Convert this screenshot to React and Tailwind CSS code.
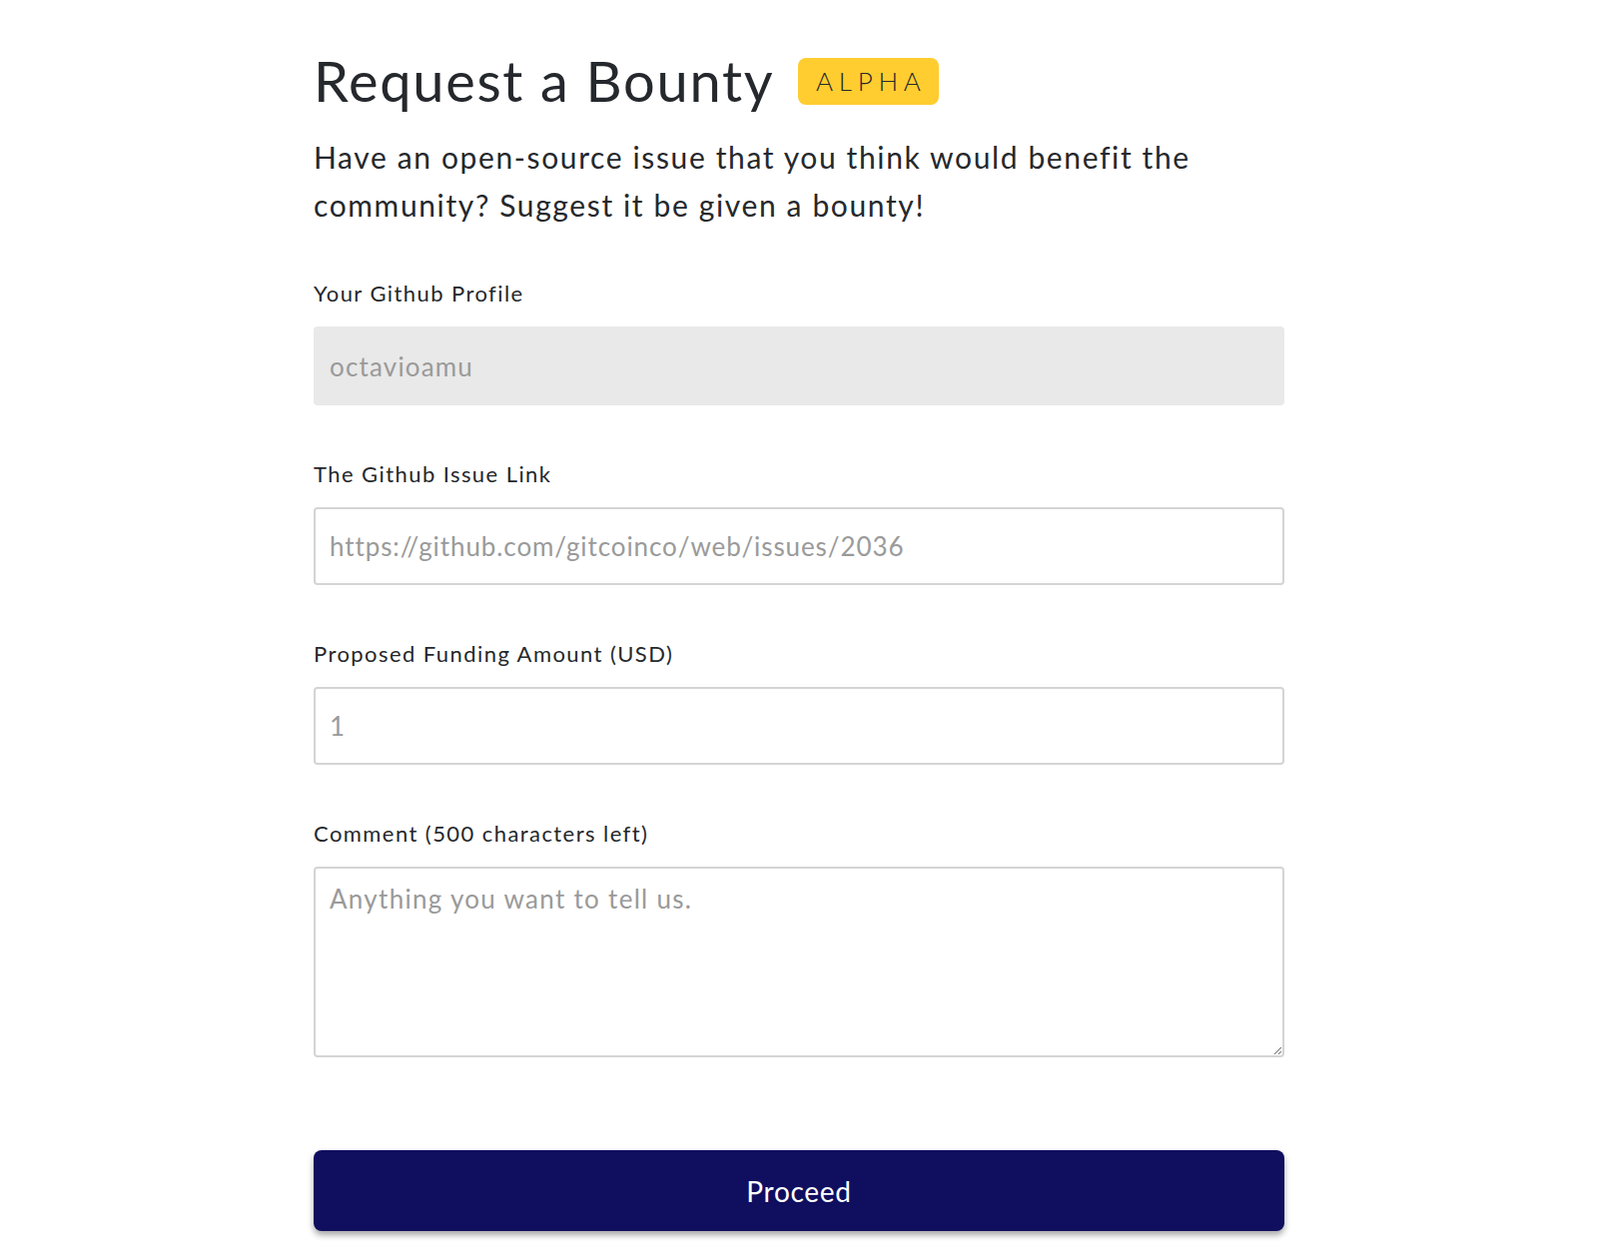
import React from 'react';

const font = "font-['Lato','Open_Sans',sans-serif]";

function Field({ label, children }) {
  return (
    <div className="mb-[52px]">
      <label className="block text-[22px] leading-[33px] tracking-[0.065em] text-[#25282c] mb-[17px]">{label}</label>
      {children}
    </div>
  );
}

export default function App() {
  return (
    <div className={`min-h-screen bg-white flex justify-center pr-[2px] ${font}`}>
      <div className="w-[972px] pt-[47px] pb-[20px]">
        {/* Header */}
        <div className="flex items-center">
          <h1 className="text-[56px] leading-[1.2] tracking-[0.03em] text-[#25282c] font-normal">Request a Bounty</h1>
          <span className="ml-[24px] mt-[2px] h-[47px] w-[141px] flex items-center justify-center rounded-lg bg-[#ffcd30] text-[26px] font-light tracking-[0.22em] pl-[5px] text-[#25282c]">
            ALPHA
          </span>
        </div>
        <p className="mt-[19px] text-[30px] leading-[48px] tracking-[0.054em] text-[#25282c]">
          Have an open-source issue that you think would benefit the community? Suggest it be given a bounty!
        </p>

        {/* Form */}
        <form className="mt-[48px]">
          <Field label="Your Github Profile">
            <input
              type="text"
              value="octavioamu"
              disabled
              readOnly
              className="block w-full h-[79px] rounded bg-[#e9e9e9] px-[16px] text-[26px] tracking-[0.045em] text-[#9a9a9a] outline-none"
            />
          </Field>

          <Field label="The Github Issue Link">
            <input
              type="text"
              placeholder="https://github.com/gitcoinco/web/issues/2036"
              className="block w-full h-[78px] rounded border-2 border-[#d4d4d4] px-[14px] text-[26px] tracking-[0.035em] text-[#25282c] placeholder:text-[#9a9a9a] outline-none"
            />
          </Field>

          <Field label="Proposed Funding Amount (USD)">
            <input
              type="text"
              placeholder="1"
              className="block w-full h-[78px] rounded border-2 border-[#d4d4d4] px-[14px] text-[26px] tracking-[0.04em] text-[#25282c] placeholder:text-[#9a9a9a] outline-none"
            />
          </Field>

          <div>
            <label className="block text-[22px] leading-[33px] tracking-[0.065em] text-[#25282c] mb-[17px]">Comment (500 characters left)</label>
            <textarea
              placeholder="Anything you want to tell us."
              className="block w-full h-[191px] rounded border-2 border-[#d4d4d4] px-[14px] pt-[12px] text-[26px] leading-[36px] tracking-[0.05em] text-[#25282c] placeholder:text-[#9a9a9a] outline-none"
            />
          </div>

          <button
            type="button"
            className="mt-[93px] w-full h-[81px] rounded-lg bg-[#0f0e5f] text-white text-[28px] tracking-[0.025em] shadow-[0_4px_6px_rgba(0,0,0,0.35)]"
          >
            Proceed
          </button>
        </form>
      </div>
    </div>
  );
}
